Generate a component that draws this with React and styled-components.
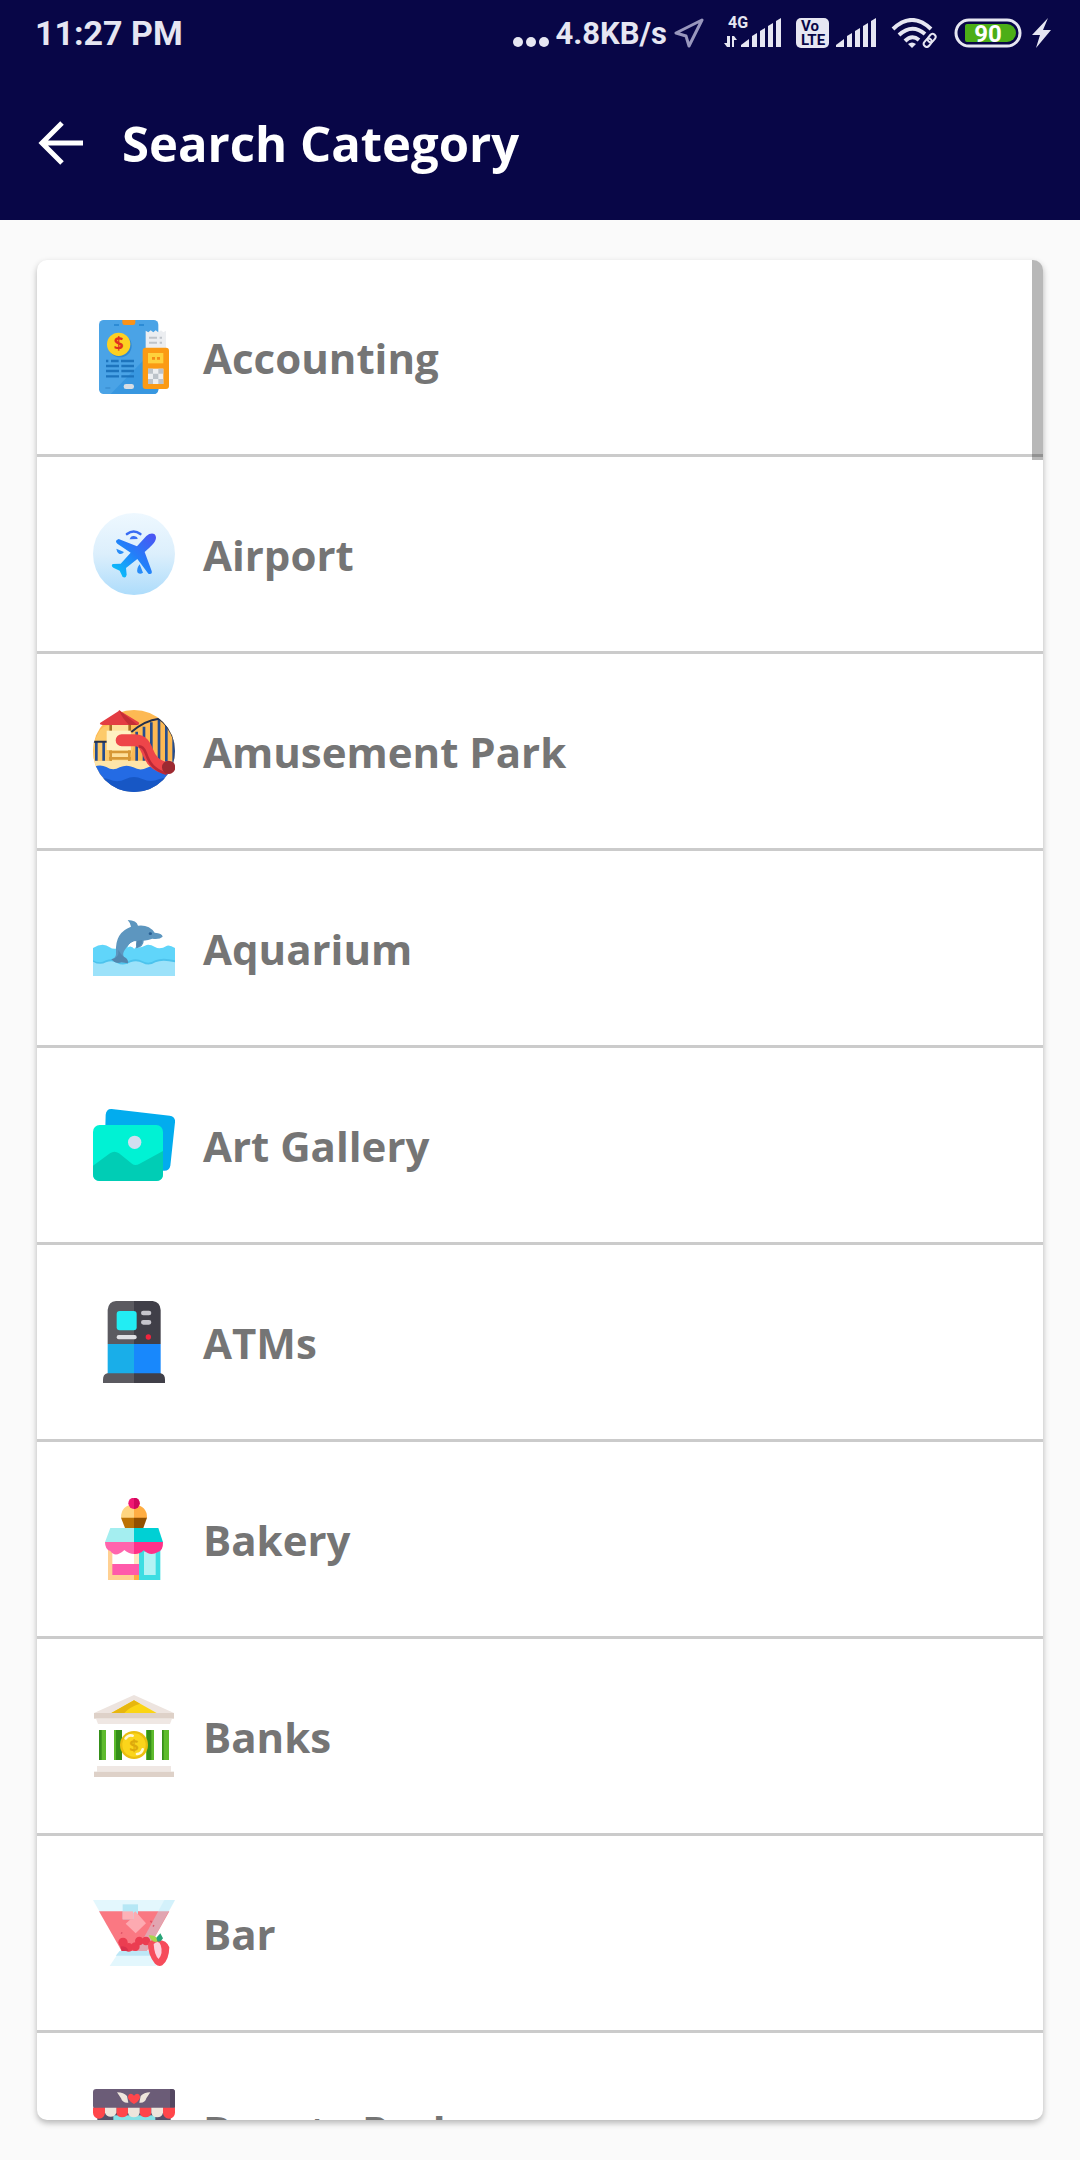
import React from "react";
import styled, { createGlobalStyle } from "styled-components";

const GlobalStyle = createGlobalStyle`
  * {
    box-sizing: border-box;
  }

  body {
    margin: 0;
    background-color: #fafafa;
    font-family: "Open Sans", "Noto Sans", sans-serif;
  }
`;

const Page = styled.div`
  display: flex;
  flex-direction: column;
  height: 100vh;
`;

const Header = styled.header`
  background-color: #080647;
  color: #fff;
`;

const StatusBar = styled.div`
  display: flex;
  align-items: center;
  justify-content: space-between;
  height: 66px;
  padding: 0 29px 0 35px;
  color: #e6e6f2;
  font-family: Roboto, sans-serif;
  font-size: 34px;
  font-weight: 700;
`;

const StatusGroup = styled.div`
  display: flex;
  align-items: center;
  gap: ${({ $gap }) => $gap}px;
`;

const Speed = styled.span`
  font-size: 31px;
`;

const StatusIcon = styled.svg`
  display: block;
  flex: none;
  font-family: Roboto, sans-serif;
  font-weight: 700;
`;

const AppBar = styled.div`
  display: flex;
  align-items: center;
  gap: 36px;
  height: 154px;
  padding: 0 36px;
`;

const BackButton = styled.button`
  padding: 0;
  border: 0;
  background: none;
  color: inherit;
  cursor: pointer;

  svg {
    display: block;
  }
`;

const Title = styled.h1`
  margin: 0;
  font-size: 49px;
  font-weight: 700;
  line-height: 60px;
`;

const Main = styled.main`
  flex: 1;
  min-height: 0;
  padding: 40px 37px;
`;

const Card = styled.div`
  position: relative;
  height: 100%;
  overflow: hidden;
  border-radius: 10px;
  background-color: #fff;
  box-shadow: 0 3px 6px rgba(0, 0, 0, 0.28);
`;

const List = styled.ul`
  height: 100%;
  margin: 0;
  padding: 0;
  overflow-y: auto;
  list-style: none;
  scrollbar-width: none;
`;

const ScrollThumb = styled.span`
  position: absolute;
  top: 0;
  right: 0;
  width: 11px;
  height: 200px;
  background-color: rgba(0, 0, 0, 0.28);
`;

const Item = styled.li`
  border-bottom: 3px solid #cbcbcb;
`;

const ItemButton = styled.button`
  display: flex;
  align-items: center;
  gap: 28px;
  width: 100%;
  height: 194px;
  padding: 0 56px;
  border: 0;
  background: none;
  color: #757575;
  font-family: inherit;
  font-size: 42px;
  font-weight: 700;
  text-align: left;
  cursor: pointer;
`;

const Picture = styled.svg`
  flex: none;
  width: 82px;
  height: 82px;
`;

const SignalBars = () => (
  <>
    <path d="M0 47V45L8 39V47Z" />
    <path d="M11 47V36L16 33V47Z" />
    <path d="M19 47V31L24 28V47Z" />
    <path d="M27 47V26L32 23V47Z" />
    <path d="M35 47V21L40 18V47Z" />
  </>
);

const DotsIcon = () => (
  <StatusIcon width="36" height="30" viewBox="513 19 36 30" fill="currentColor">
    <circle cx="518" cy="43" r="5" />
    <circle cx="531" cy="43" r="5" />
    <circle cx="544" cy="43" r="5" />
  </StatusIcon>
);

const LocationIcon = () => (
  <StatusIcon width="30" height="30" viewBox="0 0 30 30" fill="none" stroke="#9997bd" strokeWidth="3">
    <path d="M28 2L2 15L12 18L15 28Z" strokeLinejoin="round" />
  </StatusIcon>
);

const MobileDataIcon = () => (
  <StatusIcon width="57" height="30" viewBox="724 18 57 30" fill="currentColor" overflow="visible">
    <text x="728" y="28" fontSize="16">
      4G
    </text>
    <path d="M727 36H730V47H727L724 43H727Z" />
    <path d="M732 47V36H734L737 40H734V47Z" />
    <g transform="translate(741 0)">
      <SignalBars />
    </g>
  </StatusIcon>
);

const VolteIcon = () => (
  <StatusIcon width="33" height="30" viewBox="0 0 33 30">
    <rect width="33" height="30" rx="5" fill="currentColor" />
    <g fill="#080647" fontSize="15" textAnchor="middle">
      <text x="14" y="13">
        Vo
      </text>
      <text x="17" y="27">
        LTE
      </text>
    </g>
  </StatusIcon>
);

const SignalIcon = () => (
  <StatusIcon width="40" height="30" viewBox="0 18 40 30" fill="currentColor">
    <SignalBars />
  </StatusIcon>
);

const WifiIcon = () => (
  <StatusIcon width="47" height="30" viewBox="0 0 47 30" fill="none" stroke="currentColor">
    <path d="M2 11Q21 -7 40 11" strokeWidth="4" />
    <path d="M8 17Q21 5 34 16" strokeWidth="4" />
    <path d="M14 23Q21 16 28 22" strokeWidth="4" />
    <path d="M17 26Q21 23 25 26L21 30Z" fill="currentColor" stroke="none" />
    <g strokeWidth="2" transform="rotate(-50 39 22)">
      <rect x="31" y="19" width="9" height="6" rx="3" />
      <rect x="37" y="19" width="9" height="6" rx="3" />
    </g>
  </StatusIcon>
);

const BatteryIcon = () => (
  <StatusIcon width="68" height="30" viewBox="0 0 68 30">
    <rect x="2" y="2" width="64" height="26" rx="13" fill="none" stroke="currentColor" strokeWidth="3" />
    <path d="M13 6H53A9 9 0 0 1 53 24H13Q11 24 11 22V8Q11 6 13 6Z" fill="#4cae17" />
    <text x="34" y="24" fill="#fff" fontSize="24" textAnchor="middle">
      90
    </text>
  </StatusIcon>
);

const BoltIcon = () => (
  <StatusIcon width="19" height="30" viewBox="0 0 19 30" fill="currentColor">
    <path d="M16 0L0 17H8L4 30L19 12H11Z" />
  </StatusIcon>
);

const BackIcon = () => (
  <svg width="50" height="50" viewBox="0 0 50 50" fill="none" stroke="currentColor" strokeWidth="5">
    <path d="M47 25H7M26 5L6 25L26 45" />
  </svg>
);

const AccountingIcon = () => (
  <Picture viewBox="39 48 246 246">
    <rect x="57" y="60" width="178" height="222" rx="14" fill="#4aa3e6" />
    <path d="M235 135V268Q235 282 221 282H92Z" fill="#3897e0" />
    <path d="M127 60H166V68Q166 75 159 75H134Q127 75 127 68Z" fill="#fb9218" />
    <path d="M102 75H117M177 75H192" stroke="#2384cf" strokeWidth="5" />
    <circle cx="120" cy="137" r="35" fill="#3089d3" />
    <circle cx="116" cy="133" r="35" fill="#fdd022" />
    <text x="116" y="151" fontSize="52" fontWeight="700" fill="#e0301e" textAnchor="middle">
      $
    </text>
    <path
      d="M78 183H85M93 183H116M123 183H162M78 198H117M124 198H162M78 213H117M124 213H162M78 229H117M124 229H162"
      stroke="#1d74bd"
      strokeWidth="7"
    />
    <rect x="131" y="252" width="31" height="15" rx="7" fill="#d8dde3" />
    <path d="M76 264H91" stroke="#3b8fd2" strokeWidth="5" />
    <path d="M197 92L205 97L212 91L220 97L227 91L235 97L243 91L250 97L258 92V150H197Z" fill="#eceef1" />
    <path d="M207 113H231M239 113H246M207 128H231M239 128H246" stroke="#bfc4ca" strokeWidth="6" />
    <rect x="188" y="143" width="79" height="124" rx="9" fill="#fb9a14" />
    <rect x="204" y="159" width="46" height="31" fill="#fed13c" />
    <path d="M216 175H225M231 175H240" stroke="#f48c14" strokeWidth="8" />
    <rect x="204" y="206" width="46" height="46" fill="#eceef1" />
    <path
      d="M204 206H219V221H204ZM235 206H250V221H235ZM219 221H235V237H219ZM204 237H219V252H204ZM235 237H250V252H235Z"
      fill="#bcc3ca"
    />
  </Picture>
);

const AirportIcon = () => (
  <Picture viewBox="39 39 246 246">
    <defs>
      <linearGradient id="airportSky" x1="0" y1="0" x2="0" y2="1">
        <stop offset="0" stopColor="#eef8ff" />
        <stop offset="0.5" stopColor="#dceffc" />
        <stop offset="1" stopColor="#addcfb" />
      </linearGradient>
      <linearGradient id="airportPlane" gradientUnits="userSpaceOnUse" x1="220" y1="105" x2="108" y2="222">
        <stop offset="0" stopColor="#4b55f3" />
        <stop offset="0.5" stopColor="#247ef9" />
        <stop offset="1" stopColor="#08c0fa" />
      </linearGradient>
    </defs>
    <circle cx="162" cy="162" r="123" fill="url(#airportSky)" />
    <path
      d="M199 108Q211 98 223 102Q232 110 225 124Q221 133 194 156L215 213Q218 224 205 221L172 177L138 204L140 224Q138 236 128 231L119 212L100 203Q92 198 98 192L122 191L152 158L112 131Q102 122 116 117L171 139Z"
      fill="url(#airportPlane)"
    />
    <path d="M141 102Q161 87 181 102" fill="none" stroke="#396df4" strokeWidth="8" strokeLinecap="round" />
    <path d="M149 118Q152 107 162 108Q173 110 173 117Z" fill="#3a70f4" />
    <path d="M109 146L132 156Q126 164 117 161Q110 156 109 146ZM179 193L189 218Q180 224 173 218Q168 206 179 193Z" fill="#2a8df8" />
  </Picture>
);

const AmusementParkIcon = () => (
  <Picture viewBox="39 30 246 246">
    <defs>
      <clipPath id="parkCircle">
        <circle cx="162" cy="153" r="123" />
      </clipPath>
    </defs>
    <g clipPath="url(#parkCircle)">
      <rect x="39" y="30" width="246" height="246" fill="#fdb953" />
      <path d="M55 100Q65 75 100 75L170 105L150 180H40V130Z" fill="#fdca6a" />
      <rect x="39" y="182" width="246" height="30" fill="#fee5a9" />
      <path
        d="M49 125V182M71 125V182M170 95V182M192 80V182M214 67V182M237 57V182M259 75V185M281 110V190"
        stroke="#254d8f"
        strokeWidth="8"
      />
      <path d="M39 125H82M154 96Q194 61 237 56Q267 75 285 125" fill="none" stroke="#24304c" strokeWidth="6" />
      <path d="M39 202Q60 191 79 201Q99 214 119 202Q140 192 160 202Q181 214 201 203Q225 190 250 211L285 205V276H39Z" fill="#246be4" />
      <path d="M39 247Q63 228 87 238Q112 250 137 237Q162 225 187 237Q213 249 238 237Q260 230 280 238V276H39Z" fill="#1757c5" />
    </g>
    <rect x="88" y="72" width="65" height="111" fill="#fee09b" />
    <path d="M92 73V97M149 73V97" stroke="#a96f22" strokeWidth="8" />
    <path d="M92 151V183M148 151V183M87 156H153M87 175H153" stroke="#d79836" strokeWidth="8" />
    <rect x="80" y="92" width="72" height="58" fill="#fff0c2" />
    <path d="M115 34Q118 28 122 34L176 67Q180 75 168 75H68Q56 75 61 68Z" fill="#e33c42" />
    <path d="M117 31L173 75H147Q126 54 117 31Z" fill="#c42e35" />
    <path d="M125 121H162C205 121 194 158 220 184Q238 203 265 203" fill="none" stroke="#ee4549" strokeWidth="36" strokeLinecap="round" />
    <path d="M176 139Q190 139 197 158Q207 187 221 200Q236 214 260 221" fill="none" stroke="#bd2937" strokeWidth="8" />
    <circle cx="266" cy="202" r="20" fill="#9d2931" />
  </Picture>
);

const AquariumIcon = () => (
  <Picture viewBox="39 21 246 246">
    <path d="M39 144Q69 126 89 142Q101 151 125 142L145 135Q171 151 200 135Q211 133 225 141Q240 150 261 137Q270 134 285 144V228H39Z" fill="#60d5fa" />
    <path d="M39 181Q59 193 78 181Q98 174 111 184Q130 194 151 181Q171 174 188 184Q207 194 226 181Q247 172 285 181V228H39Z" fill="#4dc3ed" />
    <path d="M39 185Q59 197 78 187Q98 180 111 189Q130 199 151 187Q171 180 188 189Q207 199 226 187Q247 178 285 187V228H39Z" fill="#9ce2fa" />
    <path
      d="M143 60Q170 61 174 77Q207 73 224 98Q247 100 248 110Q239 119 217 116Q205 121 191 122Q192 139 169 145Q166 132 171 123Q151 123 134 150Q126 162 132 171Q144 175 144 190Q124 184 116 188Q105 190 94 178Q110 174 108 155Q105 97 153 80Q153 71 143 60Z"
      fill="#5d96bf"
    />
    <path d="M115 150Q122 163 132 171Q144 175 144 190Q124 184 116 188Q105 190 94 178Q119 174 115 150ZM169 123L187 120Q188 136 169 145Z" fill="#5286ae" />
    <path d="M166 124Q169 138 163 147Q154 134 142 143Q149 126 166 124Z" fill="#fff" />
    <ellipse cx="211" cy="101" rx="5" ry="4" fill="#285f93" />
  </Picture>
);

const ArtGalleryIcon = () => (
  <Picture viewBox="39 612 246 246">
    <path d="M95 627L269 647Q287 650 285 667L271 797Q268 813 251 812L73 790L77 644Q79 626 95 627Z" fill="#02acee" />
    <rect x="39" y="675" width="210" height="168" rx="20" fill="#00f2d4" />
    <path d="M39 797L90 760Q103 750 117 760L156 791Q165 799 179 791L249 753V823Q249 843 229 843H59Q39 843 39 823Z" fill="#00cdb5" />
    <circle cx="164" cy="727" r="20" fill="#d2def0" />
  </Picture>
);

const AtmIcon = () => (
  <Picture viewBox="39 33 246 246">
    <path d="M83 162V60Q85 35 108 33H162V162Z" fill="#5b5a60" />
    <path d="M162 33H218Q241 36 242 60V162H162Z" fill="#403f48" />
    <rect x="83" y="162" width="79" height="90" fill="#19aee9" />
    <rect x="162" y="162" width="80" height="90" fill="#1888fc" />
    <path d="M162 250H82Q69 253 69 269V279H162Z" fill="#5b5a60" />
    <path d="M162 250H242Q255 253 255 269V279H162Z" fill="#403f48" />
    <rect x="110" y="63" width="60" height="58" rx="9" fill="#22edf3" />
    <rect x="110" y="135" width="60" height="13" rx="6" fill="#e0e0e5" />
    <path d="M190 69H207M190 97H207" stroke="#c6c5cc" strokeWidth="14" strokeLinecap="round" />
    <circle cx="205" cy="141" r="8" fill="#f3243d" />
  </Picture>
);

const BakeryIcon = () => (
  <Picture viewBox="39 39 246 246">
    <path d="M123 99Q122 62 162 57V99Z" fill="#ffd580" />
    <path d="M162 57Q202 63 201 99H162Z" fill="#ffad42" />
    <path d="M123 98H162V129H135Z" fill="#bc7205" />
    <path d="M162 98H201L190 129H162Z" fill="#925000" />
    <circle cx="162" cy="55" r="17" fill="#f01873" />
    <path d="M162 38A17 17 0 0 1 162 72Z" fill="#d0085c" />
    <path d="M84 190H162V285H84Z" fill="#ffd092" />
    <path d="M162 190H177V285H162Z" fill="#ffad42" />
    <path d="M177 190H241V285H177Z" fill="#3ddde2" />
    <path d="M97 195H162V237H97Z" fill="#fff" />
    <path d="M162 195H177V237H162Z" fill="#ffe8c1" />
    <path d="M97 237H177V270H97Z" fill="#ff5aaa" />
    <rect x="192" y="200" width="35" height="70" fill="#b3f3f4" />
    <path d="M91 129H162V172H75Z" fill="#a4eef0" />
    <path d="M162 129H235L249 172H162Z" fill="#00d0d4" />
    <path d="M75 171H162V207Q147 207 133 195Q106 220 91 198Q75 194 75 171Z" fill="#ff65ad" />
    <path d="M162 171H249Q250 196 234 201Q211 215 191 196Q178 209 162 207Z" fill="#ff3189" />
  </Picture>
);

const BankIcon = () => (
  <Picture viewBox="39 30 246 246">
    <path d="M42 84L162 30L282 84Z" fill="#ede4df" />
    <path d="M94 84L162 46L230 84Z" fill="#fbd514" />
    <path d="M94 84L162 46L180 56Q148 66 133 84Z" fill="#e7b60e" />
    <rect x="42" y="84" width="240" height="17" fill="#ded1c8" />
    <path d="M48 101H276L270 117H54Z" fill="#efe7e3" />
    <path d="M57 135H78V225H57ZM102 135H126V225H102ZM198 135H222V225H198ZM246 135H267V225H246Z" fill="#5ebb2d" />
    <path d="M57 135H65V225H57ZM108 135H126V225H108ZM201 135H214V225H201ZM246 135H251V225H246Z" fill="#358f19" />
    <rect x="51" y="243" width="222" height="17" fill="#efe7e3" />
    <rect x="42" y="260" width="240" height="16" fill="#ded1c8" />
    <circle cx="162" cy="180" r="42" fill="#eabe0f" />
    <circle cx="162" cy="180" r="35" fill="#fbd51b" />
    <path d="M137 160Q146 148 158 152M171 207Q184 206 188 193" fill="none" stroke="#fff8d5" strokeWidth="8" strokeLinecap="round" />
    <text x="162" y="198" fontSize="50" fontWeight="700" fill="#dda90b" textAnchor="middle">
      $
    </text>
  </Picture>
);

const BarIcon = () => (
  <Picture viewBox="39 21 246 246">
    <path d="M39 45H285L201 198H125Z" fill="#e3f7fd" />
    <path d="M57 79H268L201 198H125Z" fill="#fa7882" />
    <path d="M253 45H285L201 198H170Z" fill="#bce9f8" opacity="0.4" />
    <path d="M119 198H205L230 243H89Z" fill="#e3f7fd" />
    <path d="M119 198H205L213 212H107Z" fill="#bce7f6" />
    <path d="M128 58H174V103H128Z" fill="#b5e7f5" />
    <path d="M128 79H159V103H128Z" fill="#fdb1b7" />
    <path d="M166 79L198 115L167 145L137 116L152 103H160V84Z" fill="#fdaab1" />
    <path d="M211 108L216 112M219 121L222 124M123 143L127 145" stroke="#df5265" strokeWidth="5" />
    <g fill="#eb3d51">
      <circle cx="129" cy="172" r="14" />
      <circle cx="146" cy="187" r="13" />
      <circle cx="166" cy="185" r="13" />
      <circle cx="178" cy="168" r="13" />
      <circle cx="198" cy="168" r="13" />
    </g>
    <path d="M120 184Q142 181 145 198H125Z" fill="#d9304b" />
    <path d="M204 177Q211 162 232 165Q260 164 268 187Q267 226 247 241Q236 247 225 236Q203 209 204 177Z" fill="#f64c5b" />
    <path d="M221 177Q236 163 242 180Q250 205 236 222Q223 211 221 177Z" fill="#fdd0dc" />
    <path d="M206 151Q231 148 234 169Q217 177 206 151Z" fill="#a9d44d" />
    <path d="M229 158L241 145L249 160Q242 173 232 169Z" fill="#28a477" />
  </Picture>
);

const BeautyParlourIcon = () => (
  <Picture viewBox="219 207 246 246">
    <rect x="232" y="255" width="220" height="190" fill="#57516a" />
    <rect x="280" y="286" width="126" height="159" fill="#87e1e6" />
    <rect x="219" y="207" width="246" height="60" rx="10" fill="#6b5c77" />
    <path d="M450 207H455Q465 207 465 217V263H450Z" fill="#544761" />
    <path
      d="M219 263H255V278A18 18 0 0 1 219 278ZM289 263H324V278A18 18 0 0 1 289 278ZM359 263H394V278A18 18 0 0 1 359 278ZM429 263H465V278A18 18 0 0 1 429 278Z"
      fill="#ff464b"
    />
    <path
      d="M255 263H289V278A18 18 0 0 1 255 278ZM324 263H359V278A18 18 0 0 1 324 278ZM394 263H429V278A18 18 0 0 1 394 278Z"
      fill="#ede5dc"
    />
    <path d="M291 217Q312 218 321 228L325 248Q308 250 303 235ZM391 217Q371 218 362 228L358 248Q375 250 379 235Z" fill="#ede5dc" />
    <path d="M342 227Q350 217 358 224Q367 237 342 252Q317 237 326 224Q334 217 342 227Z" fill="#ff464b" />
  </Picture>
);

const categories = [
  { name: "Accounting", Icon: AccountingIcon },
  { name: "Airport", Icon: AirportIcon },
  { name: "Amusement Park", Icon: AmusementParkIcon },
  { name: "Aquarium", Icon: AquariumIcon },
  { name: "Art Gallery", Icon: ArtGalleryIcon },
  { name: "ATMs", Icon: AtmIcon },
  { name: "Bakery", Icon: BakeryIcon },
  { name: "Banks", Icon: BankIcon },
  { name: "Bar", Icon: BarIcon },
  { name: "Beauty Parlour", Icon: BeautyParlourIcon },
];

const App = () => {
  return (
    <Page>
      <GlobalStyle />
      <Header>
        <StatusBar>
          <span>11:27 PM</span>
          <StatusGroup $gap={15}>
            <StatusGroup $gap={20}>
              <StatusGroup $gap={7}>
                <DotsIcon />
                <Speed>4.8KB/s</Speed>
                <LocationIcon />
              </StatusGroup>
              <MobileDataIcon />
            </StatusGroup>
            <StatusGroup $gap={7}>
              <VolteIcon />
              <SignalIcon />
            </StatusGroup>
            <StatusGroup $gap={16}>
              <WifiIcon />
              <StatusGroup $gap={10}>
                <BatteryIcon />
                <BoltIcon />
              </StatusGroup>
            </StatusGroup>
          </StatusGroup>
        </StatusBar>

        <AppBar>
          <BackButton type="button" aria-label="Back">
            <BackIcon />
          </BackButton>
          <Title>Search Category</Title>
        </AppBar>
      </Header>

      <Main>
        <Card>
          <List>
            {categories.map(({ name, Icon }) => (
              <Item key={name}>
                <ItemButton type="button">
                  <Icon />
                  {name}
                </ItemButton>
              </Item>
            ))}
          </List>
          <ScrollThumb />
        </Card>
      </Main>
    </Page>
  );
};

export default App;
